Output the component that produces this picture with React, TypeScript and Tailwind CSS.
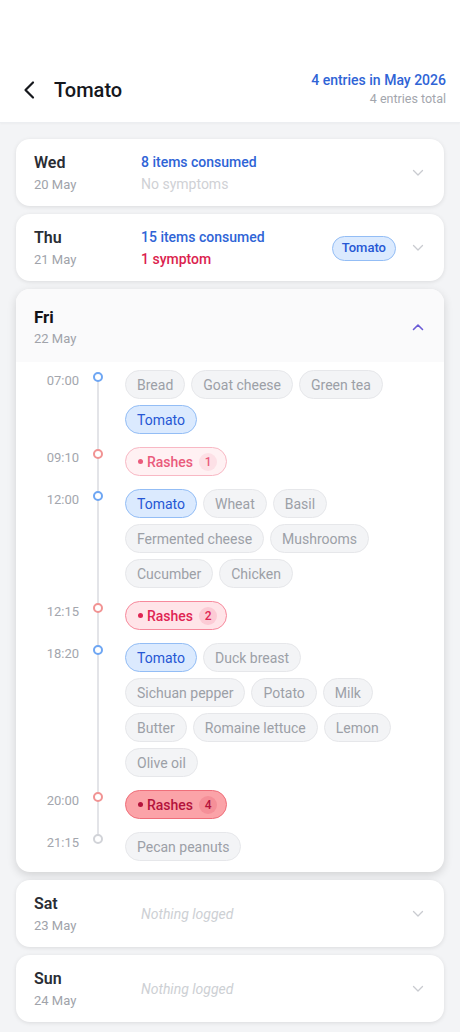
import React from 'react'

type ChipKind = 'food' | 'match' | 'rash1' | 'rash2' | 'rash4'

interface Chip {
  label: string
  kind: ChipKind
  count?: number
}

interface Entry {
  time: string
  dot: 'blue' | 'red' | 'gray'
  chips: Chip[]
}

const food = (label: string): Chip => ({ label, kind: label === 'Tomato' ? 'match' : 'food' })

const entries: Entry[] = [
  { time: '07:00', dot: 'blue', chips: ['Bread', 'Goat cheese', 'Green tea', 'Tomato'].map(food) },
  { time: '09:10', dot: 'red', chips: [{ label: 'Rashes', kind: 'rash1', count: 1 }] },
  {
    time: '12:00',
    dot: 'blue',
    chips: ['Tomato', 'Wheat', 'Basil', 'Fermented cheese', 'Mushrooms', 'Cucumber', 'Chicken'].map(food),
  },
  { time: '12:15', dot: 'red', chips: [{ label: 'Rashes', kind: 'rash2', count: 2 }] },
  {
    time: '18:20',
    dot: 'blue',
    chips: [
      'Tomato',
      'Duck breast',
      'Sichuan pepper',
      'Potato',
      'Milk',
      'Butter',
      'Romaine lettuce',
      'Lemon',
      'Olive oil',
    ].map(food),
  },
  { time: '20:00', dot: 'red', chips: [{ label: 'Rashes', kind: 'rash4', count: 4 }] },
  { time: '21:15', dot: 'gray', chips: [food('Pecan peanuts')] },
]

const chipStyles: Record<ChipKind, string> = {
  food: 'bg-[#f3f4f6] border-[#e6e7ea] text-[#9ca0a7]',
  match: 'bg-[#dbeafe] border-[#93bdf5] text-[#2657d4]',
  rash1: 'bg-[#fff1f3] border-[#f8b8c4] text-[#ea5b7c]',
  rash2: 'bg-[#ffe4e8] border-[#f7899c] text-[#df2553]',
  rash4: 'bg-[#fba3a8] border-[#ef6f7a] text-[#b4133c]',
}

const badgeStyles: Record<string, string> = {
  rash1: 'bg-[#fde0e6]',
  rash2: 'bg-[#fccbd5]',
  rash4: 'bg-[#f58f98]',
}

const dotStyles = {
  blue: 'border-[#6ea6f3]',
  red: 'border-[#f19393]',
  gray: 'border-[#d1d3d8]',
}

function ChevronDown() {
  return (
    <svg className="w-[12px] h-[8px] text-[#c9cbd0]" viewBox="0 0 12 8" fill="none" stroke="currentColor">
      <path d="M1.5 1.5l4.5 4.5 4.5-4.5" strokeWidth={1.3} strokeLinecap="round" strokeLinejoin="round" />
    </svg>
  )
}

function ChevronUp() {
  return (
    <svg className="w-[12px] h-[8px] text-[#6a5bd6]" viewBox="0 0 12 8" fill="none" stroke="currentColor">
      <path d="M1.5 6.5l4.5-4.5 4.5 4.5" strokeWidth={1.6} strokeLinecap="round" strokeLinejoin="round" />
    </svg>
  )
}

function DayLabel({ day, date, strong }: { day: string; date: string; strong?: boolean }) {
  return (
    <div className="w-[107px] shrink-0">
      <div
        className={
          strong
            ? 'text-[17px] leading-[22px] font-bold text-[#111217]'
            : 'text-[16px] leading-[22px] font-semibold text-[#2a2d34]'
        }
      >
        {day}
      </div>
      <div className="mt-[2px] text-[13px] leading-[18px] text-[#a0a3aa]">{date}</div>
    </div>
  )
}

function CollapsedCard({
  day,
  date,
  consumed,
  symptoms,
  badge,
}: {
  day: string
  date: string
  consumed?: string
  symptoms?: { text: string; red: boolean }
  badge?: string
}) {
  return (
    <div className="bg-white rounded-[14px] shadow-[0_1px_4px_rgba(0,0,0,0.1)] flex items-center pl-[18px] pr-[20px] pt-[13px] pb-[12px]">
      <DayLabel day={day} date={date} />
      <div className="flex-1">
        {consumed ? (
          <>
            <div className="text-[14px] leading-[20px] font-medium text-[#2f64d6]">{consumed}</div>
            {symptoms && (
              <div
                className={
                  symptoms.red
                    ? 'mt-[2px] text-[14px] leading-[20px] font-medium text-[#db1f4f]'
                    : 'mt-[2px] text-[14px] leading-[20px] text-[#cfd1d5]'
                }
              >
                {symptoms.text}
              </div>
            )}
          </>
        ) : (
          <div className="text-[14px] leading-[20px] italic text-[#cdd0d4]">Nothing logged</div>
        )}
      </div>
      {badge && (
        <span className="mr-[16px] h-[25px] px-[9px] flex items-center rounded-full bg-[#dbeafe] border border-[#93bdf5] text-[13px] font-medium text-[#2657d4]">
          {badge}
        </span>
      )}
      <ChevronDown />
    </div>
  )
}

function ChipView({ chip }: { chip: Chip }) {
  const isRash = chip.count !== undefined
  return (
    <span
      className={`h-[29px] flex items-center rounded-full border text-[14px] leading-none ${chipStyles[chip.kind]} ${
        isRash ? 'pl-[12px] pr-[9px]' : 'px-[11px]'
      }`}
    >
      {isRash && <span className="w-[5px] h-[5px] rounded-full bg-current mr-[4px]" />}
      <span className={isRash ? 'font-medium' : ''}>{chip.label}</span>
      {isRash && (
        <span
          className={`ml-[6px] w-[18px] h-[18px] rounded-full flex items-center justify-center text-[12px] font-medium ${badgeStyles[chip.kind]}`}
        >
          {chip.count}
        </span>
      )}
    </span>
  )
}

function Timeline() {
  return (
    <div className="pt-[8px] pb-[11px] pl-[17px] pr-[34px]">
      {entries.map((entry, i) => {
        const first = i === 0
        const last = i === entries.length - 1
        return (
          <div key={entry.time} className="flex">
            <div className="w-[46px] shrink-0 text-right pt-[2px] text-[13px] leading-[18px] text-[#a3a6ad]">
              {entry.time}
            </div>
            <div className="relative w-[38px] shrink-0">
              <div
                className={`absolute left-[18px] w-[2px] bg-[#e3e4e8] ${
                  first ? 'top-[7px] bottom-0' : last ? 'top-0 h-[7px]' : 'top-0 bottom-0'
                }`}
              />
              <div
                className={`absolute left-[14px] top-[2px] w-[10px] h-[10px] rounded-full border-2 bg-white ${dotStyles[entry.dot]}`}
              />
            </div>
            <div className={`ml-[8px] flex-1 flex flex-wrap gap-[6px] ${last ? '' : 'pb-[13px]'}`}>
              {entry.chips.map((chip, j) => (
                <ChipView key={j} chip={chip} />
              ))}
            </div>
          </div>
        )
      })}
    </div>
  )
}

export default function App() {
  return (
    <div className="min-h-[1032px] bg-[#f3f4f6] font-['Roboto',sans-serif]">
      {/* Header */}
      <header className="bg-white h-[123px] pt-[56px] border-b border-[#eceef1] shadow-[0_1px_2px_rgba(0,0,0,0.03)]">
        <div className="flex items-center justify-between pl-[22px] pr-[14px] pt-[15px]">
          <div className="flex items-center">
            <svg className="w-[16px] h-[20px] text-[#16181d]" viewBox="0 0 16 20" fill="none" stroke="currentColor">
              <path d="M11 2.5L3.5 10l7.5 7.5" strokeWidth={2.2} strokeLinecap="round" strokeLinejoin="round" />
            </svg>
            <h1 className="ml-[16px] text-[20px] font-medium text-[#15171c]">Tomato</h1>
          </div>
          <div className="text-right">
            <div className="text-[14px] leading-[18px] font-medium text-[#2f64d6]">4 entries in May 2026</div>
            <div className="mt-[1px] text-[12.5px] leading-[18px] text-[#a3a6ad]">4 entries total</div>
          </div>
        </div>
      </header>

      <main className="px-[16px] pt-[16px] pb-[8px] flex flex-col gap-[8px]">
        <CollapsedCard
          day="Wed"
          date="20 May"
          consumed="8 items consumed"
          symptoms={{ text: 'No symptoms', red: false }}
        />
        <CollapsedCard
          day="Thu"
          date="21 May"
          consumed="15 items consumed"
          symptoms={{ text: '1 symptom', red: true }}
          badge="Tomato"
        />

        {/* Expanded day */}
        <div className="bg-white rounded-[14px] overflow-hidden shadow-[0_3px_10px_rgba(0,0,0,0.14)]">
          <div className="bg-[#fafafb] flex items-center pl-[18px] pr-[20px] pt-[17px] pb-[14px]">
            <DayLabel day="Fri" date="22 May" strong />
            <div className="flex-1" />
            <ChevronUp />
          </div>
          <Timeline />
        </div>

        <CollapsedCard day="Sat" date="23 May" />
        <CollapsedCard day="Sun" date="24 May" />
      </main>
    </div>
  )
}
